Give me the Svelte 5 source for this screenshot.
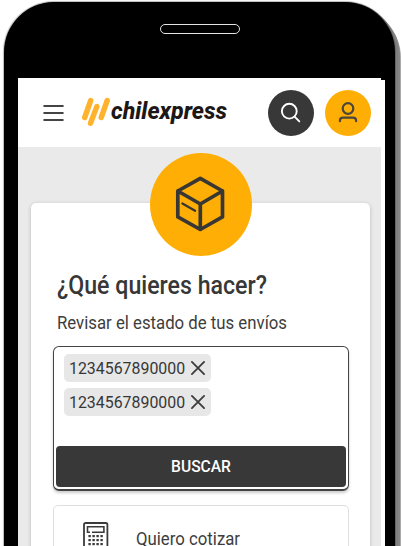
<script>
  const codes = ['1234567890000', '1234567890000'];
  const keys = [0, 1, 2, 3].flatMap((r) => [0, 1, 2, 3].map((c) => ({ x: 5.4 + c * 4, y: 13 + r * 4 })));
</script>

<div class="stage">
  <div class="phone">
    <div class="speaker"></div>
    <div class="screen">
      <header>
        <svg class="menu" width="21" height="18" viewBox="0 0 21 18">
          <path d="M1.2 2h18.6M1.2 9h18.6M1.2 16h18.6" stroke="#444" stroke-width="2" stroke-linecap="round" />
        </svg>
        <svg class="logo" width="150" height="32" viewBox="0 0 150 32">
          <path d="M3.7 22.5L9.7 5.5M9.5 28.2L15.8 11.6M20.2 22.5L26.2 5.5" stroke="#ffb22c" stroke-width="5.4" stroke-linecap="round" />
          <text x="30" y="24.3" textLength="116" lengthAdjust="spacingAndGlyphs">chilexpress</text>
        </svg>
        <button class="round dark" aria-label="Buscar">
          <svg width="46" height="46" viewBox="0 0 46 46" fill="none" stroke="#fff" stroke-width="1.9" stroke-linecap="round">
            <circle cx="21.3" cy="21.2" r="7.4" /><path d="M26.8 26.8L31.3 31.4" />
          </svg>
        </button>
        <button class="round" aria-label="Mi cuenta">
          <svg width="46" height="46" viewBox="0 0 46 46" fill="none" stroke="#4b463b" stroke-width="2.2" stroke-linecap="round">
            <circle cx="23" cy="18.5" r="5.3" /><path d="M14.9 31.2v-.5q0-3.1 3.2-3.1h9.8q3.2 0 3.2 3.1v.5" />
          </svg>
        </button>
      </header>
      <main>
        <section class="card">
          <div class="box">
            <svg width="102" height="103" viewBox="0 0 102 103" fill="none" stroke="#393733" stroke-width="3.7" stroke-linecap="round" stroke-linejoin="round">
              <path d="M50.3 25.3L72.5 38V63.9L50.3 76.5L27.8 63.9V38ZM27.8 38L50.3 51L72.5 38M50.3 51V76.5" />
              <path d="M32.4 50.5L45.1 57.8" stroke-width="2.3" />
            </svg>
          </div>
          <h1><svg width="222" height="34"><text x="0" y="25" textLength="210" lengthAdjust="spacingAndGlyphs">¿Qué quieres hacer?</text></svg></h1>
          <p><svg width="240" height="26"><text x="0" y="19" textLength="230" lengthAdjust="spacingAndGlyphs">Revisar el estado de tus envíos</text></svg></p>
          <div class="field">
            {#each codes as code}
              <span class="chip">{code}
                <svg width="14" height="14" viewBox="0 0 14 14"><path d="M.9 .9L13.1 13.1M13.1 .9L.9 13.1" stroke="#3c3c3c" stroke-width="1.8" stroke-linecap="round" /></svg>
              </span>
            {/each}
            <button class="submit">BUSCAR</button>
          </div>
          <div class="option">
            <svg width="26" height="36" viewBox="0 0 26 36" fill="none" stroke="#3b3b3b">
              <rect x="1" y="1" width="23.4" height="34" rx="1.6" stroke-width="1.8" />
              <path d="M7 10.2H4.5V4.8H20.9V10.2H9" stroke-width="1.6" />
              {#each keys as k}<rect x={k.x} y={k.y} width="2.4" height="2.2" fill="#3b3b3b" stroke="none" />{/each}
            </svg>
            <svg class="label" width="110" height="26"><text x="0" y="19" textLength="104" lengthAdjust="spacingAndGlyphs">Quiero cotizar</text></svg>
          </div>
        </section>
      </main>
    </div>
  </div>
</div>

<style>
  .stage { width: 402px; height: 546px; overflow: hidden; background: #fff; font-family: Roboto, sans-serif; color: #373737; }
  .stage * { box-sizing: border-box; }
  svg { display: block; flex: none; overflow: visible; }
  .phone { width: 391px; height: 650px; margin-left: 4px; padding-left: 14px; background: #000; border-radius: 50px 50px 0 0; display: flow-root; box-shadow: 1px 0 0 #666, 3px 2px 0 #808080, 5px 4px 0 #858585, 6px 6px 0 #aaa, 0 0 1px 1px #bbb; transform: translateY(2px); }
  .speaker { width: 80px; height: 10px; margin: 22px 0 0 142px; border: 1.5px solid #e4e4e4; border-radius: 5px; }
  .screen { margin-top: 44px; width: 367px; height: 560px; background: linear-gradient(#000, #000) right top / 4px 2px no-repeat, #fff; }
  header { height: 69px; width: 363px; padding-left: 25px; display: flex; align-items: center; }
  .logo { margin-left: 17px; margin-top: -3px; }
  .logo text { font: italic 800 24px Roboto, sans-serif; fill: #1d1715; }
  .round { width: 46px; height: 46px; padding: 0; border: 0; border-radius: 50%; background: #ffae05; margin-left: 11px; }
  .round.dark { background: #383838; margin-left: 37px; }
  main { width: 363px; height: 490px; padding: 56px 11px 0 13px; background: #eaeaea; }
  .card { height: 440px; background: #fff; border-radius: 5px; box-shadow: 0 1px 4px #0003; padding-left: 22px; }
  .box { width: 102px; height: 103px; border-radius: 50%; background: #ffae05; margin-left: 97px; position: relative; top: -50px; margin-bottom: -51px; }
  h1, p { margin: 0 0 0 4px; }
  h1 { margin-top: 14px; }
  h1 text { font: 500 25px Roboto, sans-serif; fill: #373737; }
  p { margin-top: 7px; }
  p text, .label text { font: 400 18.5px Roboto, sans-serif; fill: #3d3d3d; }
  .field { width: 296px; height: 145px; margin-top: 10px; border: 1.5px solid #444; border-bottom-width: 2px; border-radius: 6px; padding: 7px 2px 2px; display: flex; flex-direction: column; align-items: flex-start; gap: 6px; box-shadow: 0 2px 3px #0003; }
  .chip { height: 28px; width: 147px; margin-left: 8px; padding-left: 5px; border-radius: 5px; background: #e7e7e7; display: flex; align-items: center; gap: 6px; font-size: 15.9px; flex: none; }
  .submit { margin-top: auto; width: 290px; height: 41px; flex: none; border: 0; border-radius: 4px; background: #383838; color: #fff; font: 500 15.6px Roboto, sans-serif; }
  .option { width: 296px; height: 80px; margin-top: 14px; border: 1.5px solid #dedede; border-radius: 5px; padding: 16px 0 0 29px; display: flex; align-items: flex-start; }
  .label { margin-left: 27px; margin-top: 4px; }
</style>
